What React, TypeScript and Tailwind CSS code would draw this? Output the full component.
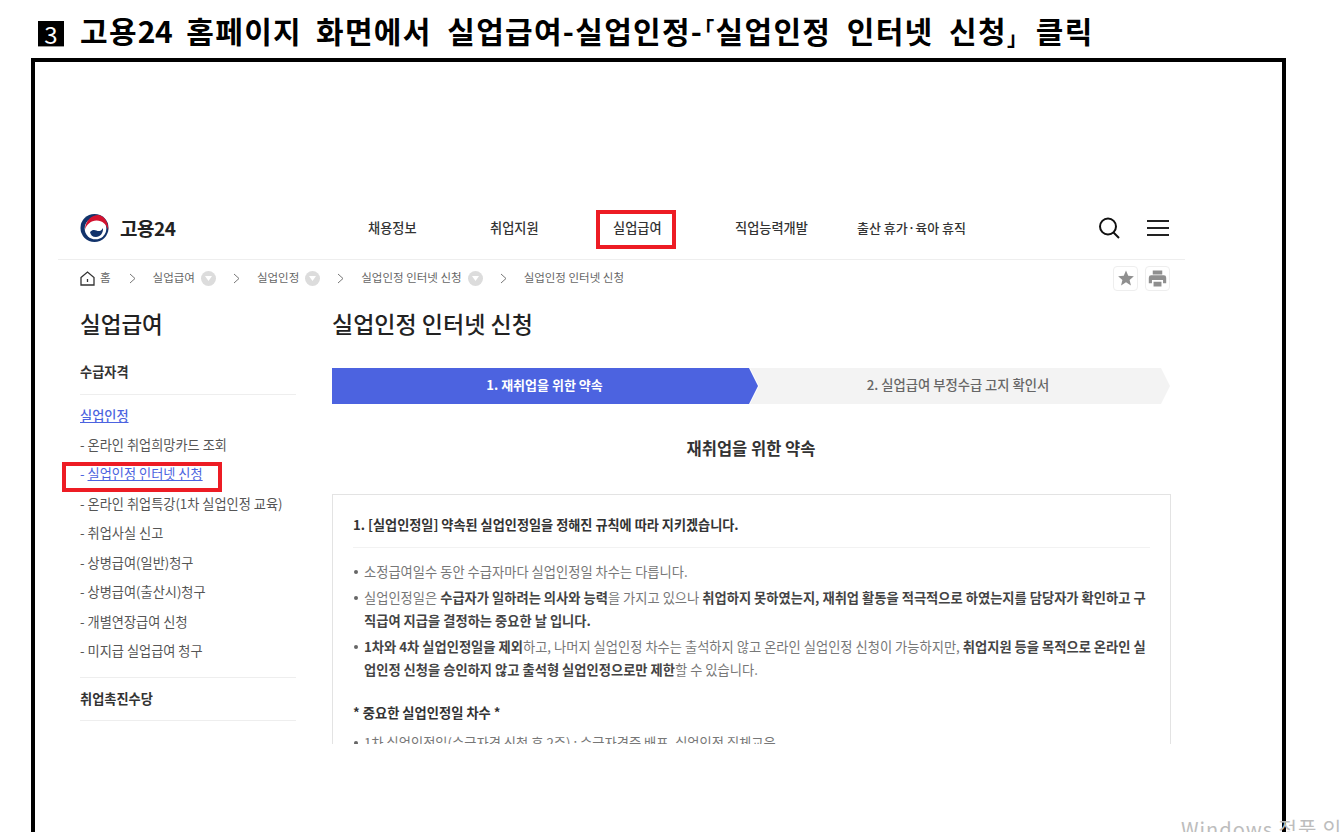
import React from "react";

const sideItems = [
  "- 온라인 취업희망카드 조회",
  "- 실업인정 인터넷 신청",
  "- 온라인 취업특강(1차 실업인정 교육)",
  "- 취업사실 신고",
  "- 상병급여(일반)청구",
  "- 상병급여(출산시)청구",
  "- 개별연장급여 신청",
  "- 미지급 실업급여 청구",
];

const crumbs = ["실업급여", "실업인정", "실업인정 인터넷 신청"];

function Logo() {
  return (
    <svg width="29" height="28" viewBox="0 0 28 28">
      <circle cx="14" cy="14" r="14" fill="#12336b" />
      <circle cx="15" cy="14.500" r="10.800" fill="#fff" />
      <path d="M4.500 15.500C4.500 7 11 1 18 1c6 1 10 7 9.800 15C26 10.500 22 6.500 16 6.500c-5.500 0-10 4-11.500 9z" fill="#d3122f" />
      <path d="M9.500 18c2-2.500 4.500-2.500 6.500-1.500s4.500 1 6.500-2.500c.5 5-3 9-7 9-3.500 0-5.500-2-6-5z" fill="#12336b" />
    </svg>
  );
}

function Caret() {
  return (
    <span className="flex h-[15px] w-[15px] items-center justify-center rounded-full bg-[#dcdcdc]">
      <svg width="7" height="5" viewBox="0 0 7 5">
        <path d="M0 0h7L3.500 5z" fill="#fff" />
      </svg>
    </span>
  );
}

function Chevron() {
  return (
    <svg width="7" height="11" viewBox="0 0 7 11" fill="none" stroke="#777" strokeWidth="1">
      <path d="M1 1l5 4.500L1 10" />
    </svg>
  );
}

function Breadcrumb() {
  return (
    <div className="flex h-[36px] items-center pl-[22px] pr-[15px] text-[11.500px] text-[#666]">
      <svg width="15" height="15" viewBox="0 0 15 15" fill="none" stroke="#333" strokeWidth="1.3">
        <path d="M1 6.500L7.500 1 14 6.500V14H1z" />
        <path d="M7.500 8v3" />
      </svg>
      <span className="ml-[5px]">홈</span>
      <span className="ml-[18px]"><Chevron /></span>
      {crumbs.map((c) => (
        <React.Fragment key={c}>
          <span className="ml-[17px]">{c}</span>
          <span className="ml-[6px]"><Caret /></span>
          <span className="ml-[17px]"><Chevron /></span>
        </React.Fragment>
      ))}
      <span className="ml-[17px]">실업인정 인터넷 신청</span>
      <div className="ml-auto flex gap-[7px]">
        <span className="flex h-[25px] w-[25px] items-center justify-center rounded-[4px] border border-[#eee]">
          <svg width="18" height="18" viewBox="0 0 24 24" fill="#8f8f8f">
            <path d="M12 2l3 7 7.500.6-5.700 4.900 1.800 7.500L12 17.800 5.400 22l1.800-7.500L1.500 9.600 9 9z" />
          </svg>
        </span>
        <span className="flex h-[25px] w-[25px] items-center justify-center rounded-[4px] border border-[#eee]">
          <svg width="19" height="19" viewBox="0 0 24 24" fill="#8f8f8f">
            <path d="M6 2h12v5H6zM4 8h16a3 3 0 0 1 3 3v7h-4v-4H5v4H1v-7a3 3 0 0 1 3-3zM7 16h10v6H7z" />
          </svg>
        </span>
      </div>
    </div>
  );
}

function Header() {
  return (
    <div className="flex h-[60px] items-center border-b border-[#eee] pb-[3px] pl-[22px] pr-[16px]">
      <Logo />
      <span className="ml-[11px] w-[248px] text-[19px] font-bold tracking-[-0.5px] text-[#222]">고용24</span>
      <nav className="-mt-[1px] flex text-[13.200px] font-medium text-[#333]">
        <span className="w-[122px]">채용정보</span>
        <span className="w-[123px]">취업지원</span>
        <span className="w-[122px]">실업급여</span>
        <span className="w-[122px]">직업능력개발</span>
        <span className="text-[13px]">출산 휴가·육아 휴직</span>
      </nav>
      <div className="ml-auto flex items-center gap-[26px]">
        <svg width="24" height="24" viewBox="0 0 24 24" fill="none" stroke="#111" strokeWidth="2">
          <circle cx="11" cy="10.500" r="8" />
          <path d="M16.500 16.500L22 22" />
        </svg>
        <svg width="22" height="18" viewBox="0 0 22 18" fill="none" stroke="#222" strokeWidth="2">
          <path d="M0 2h22M0 9h22M0 16h22" />
        </svg>
      </div>
    </div>
  );
}

function Sidebar() {
  return (
    <aside className="w-[216px] shrink-0 text-[13.200px] text-[#555]">
      <h2 className="text-[22.500px] font-medium leading-[32px] text-[#222]">실업급여</h2>
      <div className="mt-[23px] border-b border-[#eee] pb-[13px] font-bold leading-[19px] text-[#333]">수급자격</div>
      <a className="mt-[11px] block font-medium leading-[19px] text-[#4c63e0] underline">실업인정</a>
      <ul className="mt-[9.500px] flex flex-col gap-[10.500px] border-b border-[#eee] pb-[17px]">
        {sideItems.map((s, i) => (
          <li key={s} className="leading-[19px]">
            {i === 1 ? (
              <span className="text-[#4c63e0]">- <span className="underline">실업인정 인터넷 신청</span></span>
            ) : s}
          </li>
        ))}
      </ul>
      <div className="border-b border-[#eee] pb-[12px] pt-[11px] font-bold leading-[19px] text-[#333]">취업촉진수당</div>
    </aside>
  );
}

function Steps() {
  return (
    <div className="mt-[29px] flex h-[36px] text-[13px]">
      <div className="flex w-[426px] items-center justify-center bg-[#4c63e0] pb-[2px] pr-[1px] font-bold text-white [clip-path:polygon(0_0,calc(100%-9px)_0,100%_50%,calc(100%-9px)_100%,0_100%)]">
        1. 재취업을 위한 약속
      </div>
      <div className="-ml-[8px] flex flex-1 items-center justify-center bg-[#f3f3f3] pb-[2px] pr-[4px] text-[13.300px] font-medium text-[#666] [clip-path:polygon(0_0,calc(100%-9px)_0,100%_50%,calc(100%-9px)_100%,0_100%,9px_50%)]">
        2. 실업급여 부정수급 고지 확인서
      </div>
    </div>
  );
}

function Bullet({ children }: { children: React.ReactNode }) {
  return (
    <div className="relative pl-[11px] before:absolute before:left-[1px] before:top-[10px] before:h-[4px] before:w-[4px] before:rounded-full before:bg-[#666]">
      {children}
    </div>
  );
}

function Terms() {
  return (
    <div className="-mr-[1px] mt-[34px] h-[250px] overflow-hidden border-x border-t border-[#e3e3e3] px-[20px] pt-[20px] text-[13.280px] leading-[23px] text-[#777]">
      <div className="border-b border-[#f2f2f2] pb-[12px] text-[13.150px] font-semibold leading-[20px] text-[#333]">
        1. [실업인정일] 약속된 실업인정일을 정해진 규칙에 따라 지키겠습니다.
      </div>
      <div className="mt-[12px] flex flex-col gap-[3px]">
        <Bullet>소정급여일수 동안 수급자마다 실업인정일 차수는 다릅니다.</Bullet>
        <Bullet>
          실업인정일은 <b className="font-semibold text-[#444]">수급자가 일하려는 의사와 능력</b>을 가지고 있으나 <b className="font-semibold text-[#444]">취업하지 못하였는지, 재취업 활동을 적극적으로 하였는지를 담당자가 확인하고 구</b>
          <br />
          <b className="font-semibold text-[#444]">직급여 지급을 결정하는 중요한 날 입니다.</b>
        </Bullet>
        <Bullet>
          <b className="font-semibold text-[#444]">1차와 4차 실업인정일을 제외</b>하고, 나머지 실업인정 차수는 출석하지 않고 온라인 실업인정 신청이 가능하지만, <b className="font-semibold text-[#444]">취업지원 등을 목적으로 온라인 실</b>
          <br />
          <b className="font-semibold text-[#444]">업인정 신청을 승인하지 않고 출석형 실업인정으로만 제한</b>할 수 있습니다.
        </Bullet>
      </div>
      <div className="mt-[20px] font-semibold text-[#333]">* 중요한 실업인정일 차수 *</div>
      <div className="mt-[7px]">
        <Bullet>1차 실업인정일(수급자격 신청 후 2주) : 수급자격증 배포, 실업인정 집체교육</Bullet>
      </div>
    </div>
  );
}

export default function App() {
  return (
    <div className="relative h-[832px] w-[1341px] overflow-hidden bg-white font-['Noto_Sans_CJK_KR','Noto_Sans',sans-serif]">
      <div className="flex h-[58px] items-center pl-[38px] pt-[2px] text-[30px] font-bold text-black">
        <span className="mt-[8px] flex h-[26px] w-[26px] items-center justify-center border-b border-[#999] bg-black text-[24px] font-normal leading-none text-white">3</span>
        <span className="ml-[16px] whitespace-nowrap tracking-[1.3px] [word-spacing:7.500px]">
          <span className="[word-spacing:6px]">고용<span className="tracking-[-0.5px]">24</span> 홈페이지 화면에서</span> 실업급여-실업인정-<span className="-ml-[9px] inline-block align-[6px] text-[20px]">「</span>실업인정 인터넷 신청<span className="-mr-[8px] inline-block align-[-3px] text-[20px]">」</span> 클릭
        </span>
      </div>

      <div className="ml-[31px] h-[800px] w-[1255px] border-[4px] border-black pl-[23px] pt-[138px]">
        <div className="w-[1127px]">
          <Header />
          <Breadcrumb />
          <div className="mt-[11px] flex pl-[22px] pr-[15px]">
            <Sidebar />
            <main className="ml-[36px] flex-1">
              <h1 className="text-[23px] font-medium leading-[32px] text-[#222]">실업인정 인터넷 신청</h1>
              <Steps />
              <h3 className="mt-[32px] text-center text-[16.500px] font-semibold leading-[24px] text-[#333]">재취업을 위한 약속</h3>
              <Terms />
            </main>
          </div>
        </div>
      </div>

      <div className="absolute left-[596px] top-[210px] h-[39px] w-[80px] border-[4px] border-[#ed1c24]" />
      <div className="absolute left-[62px] top-[462px] h-[30px] w-[160px] border-[4px] border-[#ed1c24]" />
      <div className="absolute left-[1181px] top-[814px] whitespace-nowrap text-[20px] tracking-[1px] text-[#bdbdbd]">Windows 정품 인</div>
    </div>
  );
}
